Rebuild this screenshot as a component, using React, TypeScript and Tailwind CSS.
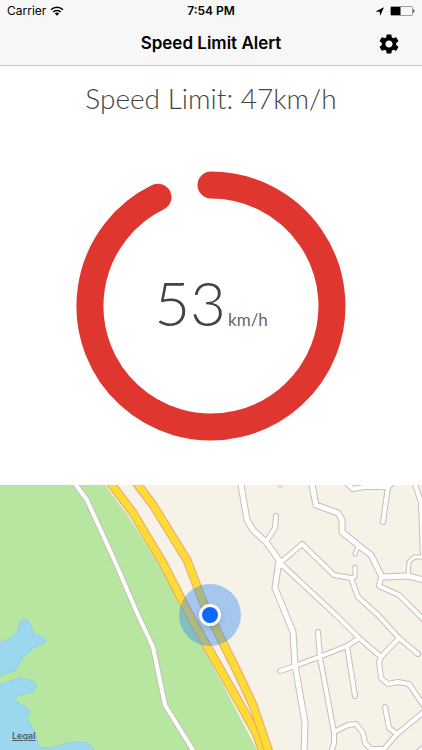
import { MdSettings } from "react-icons/md"

const roads = [
  { width: 5, d: "M240 -6 L241 0 L247 35 L253 45 L266 57 L279 75 L278 82 L275 103 L286 130 L293 147 L295 180 L305 238 L304 270" },
  { width: 5, d: "M311 -6 L312 0 L316 20 L338 28 L342 35 L342 47 L358 60 L371 70 L382 92 L408 91 L428 96" },
  { width: 4, d: "M72 -6 L76 0 L87 15 L113 72 L138 130 L153 162 L165 220 L196 270" },
  { width: 4, d: "M276 31 L275 43 L266 57" },
  { width: 4, d: "M280 78 L302 59 L334 90 L351 93 L358 112 L378 130 L399 153 L418 169" },
  { width: 4, d: "M280 78 L336 130 L359 153 L381 172 L379 177 L381 193 L388 199 L398 197 L409 199 L424 221" },
  { width: 4, d: "M399 153 L381 172" },
  { width: 3, d: "M355 82 L355 92 L351 93" },
  { width: 3, d: "M279 82 L284 80" },
  { width: 3, d: "M358 62 L355 69" },
  { width: 4, d: "M381 93 L379 101 L399 110 L426 137" },
  { width: 3, d: "M408 91 L409 77 L414 72 L428 72" },
  { width: 4, d: "M343 -5 L353 4 L364 2 L388 2 L396 -5" },
  { width: 4, d: "M388 2 L383 37" },
  { width: 4, d: "M414 -4 L421 17 L423 72" },
  { width: 3, d: "M280 -5 L280 0" },
  { width: 4, d: "M280 186 L295 181 L319 172 L347 161 L359 153" },
  { width: 4, d: "M318 147 L320 173 L334 247 L334 258 L331 268" },
  { width: 4, d: "M347 161 L355 211" },
  { width: 4, d: "M334 247 L348 240 L356 239 L363 248 L365 258 L371 264 L384 264 L397 249 L426 225" },
  { width: 4, d: "M385 222 L389 243 L397 249" },
  { width: 3, d: "M416 268 L426 260" },
]

const highways = [
  "M107 -6 L112 0 L133 28 L163 78 L188 127 L211 168 L236 212 L256 248 L264 270",
  "M134 -6 L138 0 L153 20 L187 75 L203 117 L219 150 L238 188 L253 220 L270 270",
]

function StatusBar() {
  return (
    <div className="grid grid-cols-3 items-center h-[22px] px-[7px] text-[12px] text-black">
      <div className="flex items-center gap-1">
        <span>Carrier</span>
        <svg viewBox="0 0 14 10" className="w-3.5 h-2.5" fill="none" stroke="currentColor" strokeWidth="1.6">
          <path d="M1 3.8 A8.4 8.4 0 0 1 13 3.8" />
          <path d="M3.2 6 A5.4 5.4 0 0 1 10.8 6" />
          <path d="M7 9.8 L4.8 7.6 A3.1 3.1 0 0 1 9.2 7.6 Z" fill="currentColor" stroke="none" />
        </svg>
      </div>
      <span className="text-center font-semibold">7:54 PM</span>
      <div className="flex items-center justify-end gap-1.5">
        <svg viewBox="0 0 9 9" className="size-[9px]" fill="currentColor">
          <path d="M9 0.3 L5.2 8.8 L4.6 4.8 L0.4 4.4 Z" />
        </svg>
        <svg viewBox="0 0 25 10" className="w-[25px] h-2.5">
          <rect x="0.5" y="0.5" width="22" height="9" rx="1" fill="none" stroke="#777" strokeWidth="0.7" />
          <rect x="1" y="1" width="9.5" height="8" fill="#000" />
          <path d="M23.4 3 Q25.4 5 23.4 7 Z" fill="#000" />
        </svg>
      </div>
    </div>
  )
}

function Header() {
  return (
    <header className="bg-[#f7f7f7] border-b border-[#c9c9c9]">
      <StatusBar />
      <div className="grid grid-cols-[1fr_auto_1fr] items-center h-[43px] px-[21px]">
        <h1 className="col-start-2 text-[17px] font-semibold text-black">Speed Limit Alert</h1>
        <button type="button" aria-label="Settings" className="justify-self-end text-black">
          <MdSettings className="size-6" />
        </button>
      </div>
    </header>
  )
}

function SpeedGauge() {
  return (
    <div className="grid place-items-center">
      <svg viewBox="0 0 270 270" className="col-start-1 row-start-1 w-[270px]" fill="none">
        <path d="M135 14 A121 121 0 1 1 82 26.2" stroke="#df3730" strokeWidth="27" strokeLinecap="round" />
      </svg>
      <p className="col-start-1 row-start-1 flex items-baseline gap-0.5 pb-2">
        <span className="text-[62px] leading-none font-light">53</span>
        <span className="text-[17px] text-[#666]">km/h</span>
      </p>
    </div>
  )
}

function Map() {
  return (
    <section className="relative grid flex-1 overflow-hidden bg-[#f6f2e8]">
      <svg viewBox="0 0 422 265" preserveAspectRatio="xMidYMid slice" className="w-full h-full">
        <rect width="422" height="265" fill="#f6f2e8" />
        <path d="M0 0 L105 0 L128 31 L150 65 L162 85 L211 177 L257 265 L0 265 Z" fill="#b6e6a0" />
        <g fill="#9cd7f0" stroke="#93cfe6" strokeWidth="1">
          <path d="M-2 158 L10 154 L17 147 L20 137 Q25 131 28 136 L31 140 L33 149 L43 152 Q47 156 44 158 L33 163 L23 172 L15 186 L5 188 L-2 194 Z" />
          <path d="M-2 200 L20 193 L32 196 Q37 199 36 201 L33 207 L17 211 L13 214 L30 225 L27 234 L35 247 L39 262 L50 263 L67 258 L87 257 L96 267 L-2 267 Z" />
        </g>
        {/* all outlines first, so that junctions stay open */}
        <g fill="none" strokeLinecap="round" strokeLinejoin="round">
          {roads.map(({ d, width }) => (
            <path key={d} d={d} stroke="#c6bfb8" strokeWidth={width + 2} />
          ))}
          {roads.map(({ d, width }) => (
            <path key={d} d={d} stroke="#fff" strokeWidth={width} />
          ))}
        </g>
        <g fill="none" strokeLinejoin="round">
          {highways.map((d) => (
            <g key={d}>
              <path d={d} stroke="#e9a672" strokeWidth="9" />
              <path d={d} stroke="#ffdb35" strokeWidth="7" />
            </g>
          ))}
        </g>
        <circle cx="210" cy="130" r="31" fill="#2e86f7" fillOpacity="0.4" />
        <circle cx="210" cy="130" r="11" fill="#fff" className="drop-shadow-md" />
        <circle cx="210" cy="130" r="8" fill="#1169fb" />
      </svg>
      <a href="#legal" className="absolute left-3 bottom-2 text-[9px] leading-3 font-semibold text-[#4d6069] underline">
        Legal
      </a>
    </section>
  )
}

export default function App() {
  return (
    <div className="flex flex-col min-h-screen bg-white font-['Inter',sans-serif]">
      <Header />
      <main className="flex flex-col flex-1">
        <section className="flex flex-col items-center gap-[53px] pt-3 pb-11 text-[#444] font-['Lato',sans-serif]">
          <h2 className="text-[28px] leading-10 font-light">Speed Limit: 47km/h</h2>
          <SpeedGauge />
        </section>
        <Map />
      </main>
    </div>
  )
}
